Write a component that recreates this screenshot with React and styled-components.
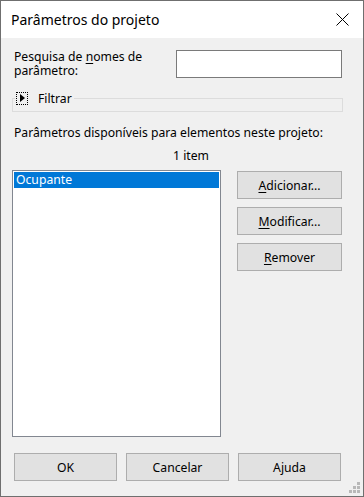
import React from "react";
import styled, { createGlobalStyle } from "styled-components";

const Global = createGlobalStyle`
  html, body { margin: 0; padding: 0; background: #f0f0f0; }
  * { box-sizing: border-box; }
`;

const FONT = `"Noto Sans", "Liberation Sans", sans-serif`;

const Window = styled.div`
  position: relative;
  width: 364px;
  height: 497px;
  border: 1px solid #6f6f6f;
  display: flex;
  flex-direction: column;
  font-family: ${FONT};
  font-size: 12.2px;
  color: #000;
  background: #f0f0f0;
`;

const TitleBar = styled.div`
  height: 37px;
  flex: none;
  background: #fff;
  display: flex;
  align-items: center;
  justify-content: space-between;
  padding: 0 14px 0 10px;
`;

const Title = styled.div`
  font-size: 14px;
  padding-bottom: 1px;
`;

const CloseIcon = styled.svg`
  width: 13px;
  height: 13px;
  display: block;
  margin-top: -1px;
`;

const Body = styled.div`
  flex: 1;
  display: flex;
  flex-direction: column;
  padding: 12px 21px 0 11px;
`;

const SearchRow = styled.div`
  display: flex;
  justify-content: space-between;
  align-items: flex-start;
  height: 28px;
`;

const Label = styled.label`
  display: flex;
  flex-direction: column;
  line-height: 14px;
  padding-left: 2px;
  width: 150px;
`;

const LabelLine = styled.span`
  white-space: nowrap;
`;

const U = styled.span`
  text-decoration: underline;
  text-underline-offset: 2px;
`;

const TextInput = styled.input`
  width: 166px;
  height: 28px;
  border: 1px solid #7a7a7a;
  background: #fff;
  margin: 0;
  padding: 0 4px;
  font: inherit;
`;

const GroupBox = styled.div`
  margin-top: 20px;
  height: 14px;
  border: 1px solid #dcdcdc;
  width: 331px;
`;

const Legend = styled.div`
  display: flex;
  align-items: center;
  gap: 10px;
  width: fit-content;
  margin-top: -10px;
  margin-left: 2px;
  padding-right: 2px;
  background: #f0f0f0;
  height: 18px;
`;

const Expander = styled.span`
  width: 12px;
  height: 13px;
  border: 1px dotted #000;
  display: flex;
  align-items: center;
  justify-content: center;
  margin-left: 1px;
`;

const Triangle = styled.span`
  width: 0;
  height: 0;
  border-top: 4px solid transparent;
  border-bottom: 4px solid transparent;
  border-left: 5px solid #000;
  margin-left: 1px;
`;

const Text = styled.div`
  line-height: 14px;
  margin-top: ${(p) => p.$mt || 0}px;
  padding-left: ${(p) => p.$pl || 0}px;
  text-align: ${(p) => p.$align || "left"};
  white-space: nowrap;
`;

const Main = styled.div`
  margin-top: 7px;
  display: flex;
  gap: 16px;
  align-items: flex-start;
`;

const ListBox = styled.div`
  width: 209px;
  height: 267px;
  border: 1px solid #828790;
  background: #fff;
  padding: 1px;
`;

const ListItem = styled.div`
  height: 16px;
  line-height: 16px;
  padding-left: 2px;
  background: ${(p) => (p.$selected ? "#0078d7" : "transparent")};
  color: ${(p) => (p.$selected ? "#fff" : "#000")};
`;

const ButtonColumn = styled.div`
  display: flex;
  flex-direction: column;
  gap: 8px;
  padding-top: 1px;
`;

const Button = styled.button`
  width: ${(p) => p.$w || 105}px;
  height: 28px;
  margin: 0;
  padding: 0;
  border: 1px solid #adadad;
  background: #e1e1e1;
  font-family: ${FONT};
  font-size: 12.2px;
  color: #000;
`;

const Footer = styled.div`
  margin-top: 16px;
  display: flex;
  gap: 9px;
  padding-left: 2px;
`;

const Grip = styled.div`
  position: absolute;
  right: 3px;
  bottom: 3px;
  width: 11px;
  height: 11px;
  display: grid;
  grid-template-columns: repeat(3, 3px);
  grid-template-rows: repeat(3, 3px);
  gap: 1px;
`;

const Dot = styled.span`
  background: ${(p) => (p.$on ? "#b8b8b8" : "transparent")};
`;

export default function App() {
  const grip = [0, 0, 1, 0, 1, 1, 1, 1, 1];
  return (
    <>
      <Global />
      <Window>
        <TitleBar>
          <Title>Parâmetros do projeto</Title>
          <CloseIcon viewBox="0 0 13 13">
            <path d="M0.5 0.5 L12.5 12.5 M12.5 0.5 L0.5 12.5" stroke="#000" strokeWidth="1" fill="none" />
          </CloseIcon>
        </TitleBar>
        <Body>
          <SearchRow>
            <Label>
              <LabelLine>
                Pesquisa de <U>n</U>omes de
              </LabelLine>
              <LabelLine>parâmetro:</LabelLine>
            </Label>
            <TextInput />
          </SearchRow>
          <GroupBox>
            <Legend>
              <Expander>
                <Triangle />
              </Expander>
              <span>Filtrar</span>
            </Legend>
          </GroupBox>
          <Text $mt={14} $pl={2}>Parâmetros disponíveis para elementos neste projeto:</Text>
          <Text $mt={9} $pl={28} $align="center">1 item</Text>
          <Main>
            <ListBox>
              <ListItem $selected>Ocupante</ListItem>
            </ListBox>
            <ButtonColumn>
              <Button><U>A</U>dicionar...</Button>
              <Button><U>M</U>odificar...</Button>
              <Button><U>R</U>emover</Button>
            </ButtonColumn>
          </Main>
          <Footer>
            <Button $w={103}>OK</Button>
            <Button $w={103}>Cancelar</Button>
            <Button $w={103}>Ajuda</Button>
          </Footer>
        </Body>
        <Grip>
          {grip.map((g, i) => (
            <Dot key={i} $on={g} />
          ))}
        </Grip>
      </Window>
    </>
  );
}
